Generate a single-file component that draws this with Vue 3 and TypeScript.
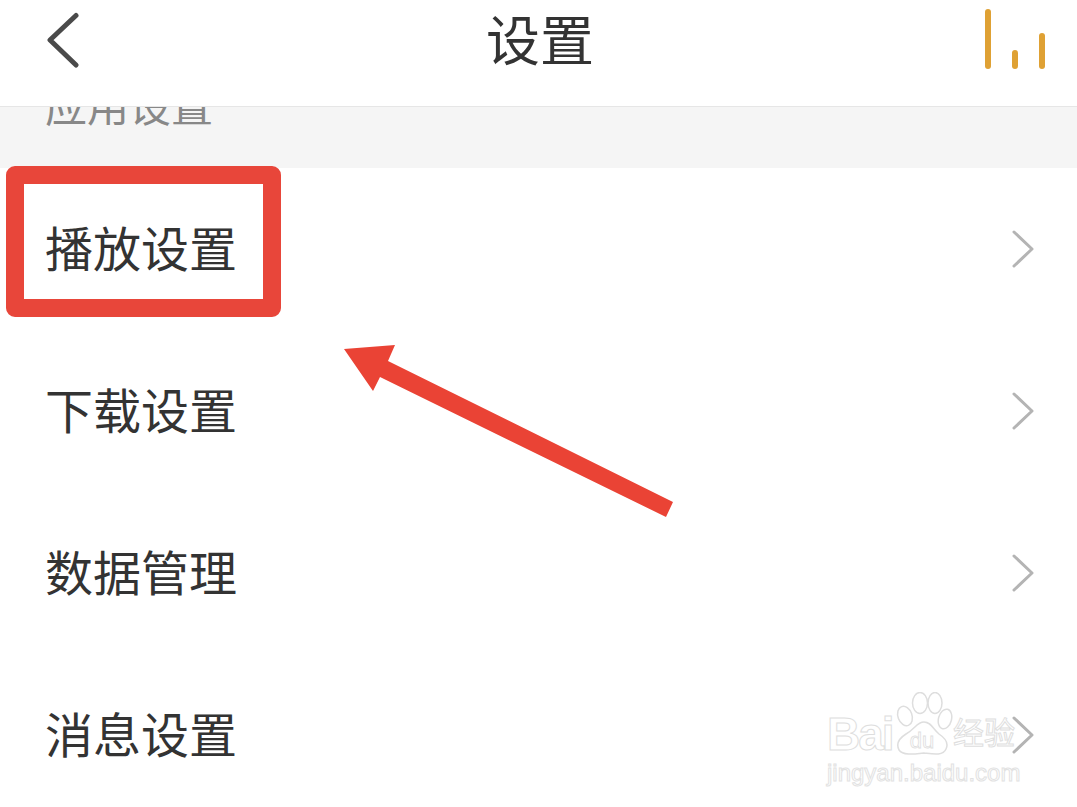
<script setup lang="ts">
const rows = ['播放设置', '下载设置', '数据管理', '消息设置']
</script>

<template>
  <div class="page">
    <header class="top-bar">
      <svg class="back" width="36" height="56" viewBox="0 0 36 56">
        <path d="M30 3.500 L4 28 L30 53" fill="none" stroke="#4a4a4a" stroke-width="5" stroke-linecap="round" stroke-linejoin="round" />
      </svg>
      <h1 class="title">设置</h1>
      <div class="bars">
        <span class="bar bar-tall"></span>
        <span class="bar bar-short"></span>
        <span class="bar bar-mid"></span>
      </div>
    </header>

    <section class="section-head">
      <span>应用设置</span>
    </section>

    <div class="list">
      <div v-for="row in rows" :key="row" class="row">
        <span class="row-label">{{ row }}</span>
        <svg class="chevron" width="24" height="40" viewBox="0 0 24 40">
          <path d="M3 3 L21 20 L3 37" fill="none" stroke="#b4b4b4" stroke-width="3" stroke-linecap="round" stroke-linejoin="round" />
        </svg>
      </div>
    </div>

    <!-- 标注 -->
    <div class="red-box"></div>
    <svg class="red-arrow" width="1077" height="807" viewBox="0 0 1077 807">
      <polygon points="344,349 395,345 388,361 673,502 666,517 380,377 373,391" fill="#ea4335" />
    </svg>

    <!-- 水印 -->
    <div class="watermark">
      <div class="wm-top">
        <span class="wm-bai">Bai</span>
        <svg class="wm-paw" width="58" height="64" viewBox="0 0 58 64">
          <g fill="none" stroke="#dedede" stroke-width="1.500">
            <ellipse cx="10" cy="24" rx="7" ry="10" transform="rotate(-20 10 24)" />
            <ellipse cx="25" cy="11" rx="7.500" ry="10.500" />
            <ellipse cx="40" cy="11" rx="7" ry="10.500" />
            <ellipse cx="50" cy="27" rx="6.500" ry="10" transform="rotate(15 50 27)" />
            <path d="M29 30 C22 30 20 37 11 42 C3 47 1 52 4 58 C8 64 20 62 29 61 C38 62 48 64 51 57 C54 51 50 46 44 42 C38 37 36 30 29 30 Z" />
          </g>
          <text x="27" y="56" text-anchor="middle" class="wm-du">du</text>
        </svg>
        <span class="wm-cn">经验</span>
      </div>
      <div class="wm-url">jingyan.baidu.com</div>
    </div>
  </div>
</template>

<style>
html,
body {
  margin: 0;
  background: #fff;
}
</style>

<style scoped>
.page {
  position: relative;
  width: 1077px;
  height: 807px;
  overflow: hidden;
  background: #fff;
  font-family: "Liberation Sans", "Noto Sans CJK SC", sans-serif;
}

.top-bar {
  height: 106px;
  box-sizing: content-box;
  border-bottom: 1px solid #e6e6e6;
  position: relative;
}

.back {
  position: absolute;
  left: 46px;
  top: 12px;
}

.title {
  margin: 0;
  padding-top: 12px;
  text-align: center;
  font-size: 54px;
  font-weight: 400;
  line-height: 60px;
  color: #333;
  padding-left: 3px;
}

.bars {
  position: absolute;
  right: 32px;
  top: 9px;
  display: flex;
  align-items: flex-end;
  gap: 21px;
  height: 60px;
}

.bar {
  width: 6px;
  border-radius: 3px;
  background: #dfa134;
}

.bar-tall {
  height: 60px;
}

.bar-short {
  height: 19px;
}

.bar-mid {
  height: 36px;
}

.section-head {
  height: 61px;
  overflow: hidden;
  background: #f5f5f5;
  padding-left: 45px;
}

.section-head span {
  display: block;
  margin-top: -24px;
  font-size: 42px;
  line-height: 50px;
  color: #888;
}

.row {
  height: 162px;
  display: flex;
  align-items: center;
  justify-content: space-between;
  padding: 0 42px 0 45px;
}

.row-label {
  font-size: 48px;
  line-height: 56px;
  color: #333;
  position: relative;
  top: 2px;
}

.red-box {
  position: absolute;
  left: 6px;
  top: 166px;
  width: 275px;
  height: 151px;
  box-sizing: border-box;
  border: 18px solid #e8463a;
  border-radius: 9px;
}

.red-arrow {
  position: absolute;
  left: 0;
  top: 0;
}

.watermark {
  position: absolute;
  left: 827px;
  top: 692px;
  width: 200px;
}

.wm-top {
  display: flex;
  align-items: flex-end;
  height: 64px;
}

.wm-bai {
  font-size: 46px;
  line-height: 44px;
  letter-spacing: -2px;
  font-weight: 700;
  color: #fff;
  -webkit-text-stroke: 1px #dedede;
  width: 68px;
  flex: none;
}

.wm-paw {
  flex: none;
}

.wm-du {
  font-size: 22px;
  fill: #fff;
  stroke: #dedede;
  stroke-width: 0.8px;
  font-family: "Liberation Sans", sans-serif;
}

.wm-cn {
  font-size: 31px;
  line-height: 44px;
  white-space: nowrap;
  color: #fff;
  -webkit-text-stroke: 1px #dedede;
}

.wm-url {
  font-size: 24px;
  line-height: 28px;
  margin-top: 3px;
  white-space: nowrap;
  color: #fff;
  -webkit-text-stroke: 1px #e2e2e2;
}
</style>
